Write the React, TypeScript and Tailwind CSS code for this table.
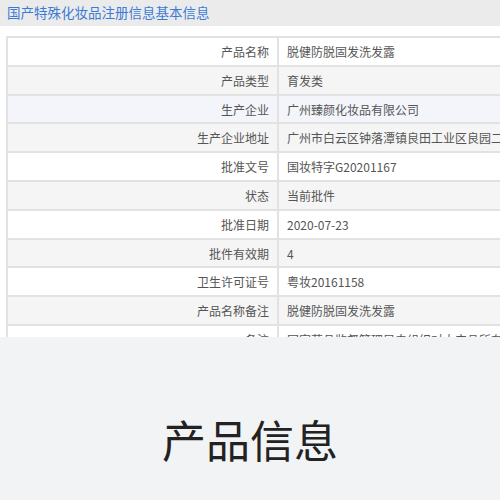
const rows: { label: string; value: string; bg: string }[] = [
  { label: "产品名称", value: "脱健防脱固发洗发露", bg: "bg-white" },
  { label: "产品类型", value: "育发类", bg: "bg-[#f5f5f5]" },
  { label: "生产企业", value: "广州臻颜化妆品有限公司", bg: "bg-[#f3f5fa]" },
  { label: "生产企业地址", value: "广州市白云区钟落潭镇良田工业区良园二路8号", bg: "bg-[#f5f5f5]" },
  { label: "批准文号", value: "国妆特字G20201167", bg: "bg-white" },
  { label: "状态", value: "当前批件", bg: "bg-[#f5f5f5]" },
  { label: "批准日期", value: "2020-07-23", bg: "bg-white" },
  { label: "批件有效期", value: "4", bg: "bg-[#f5f5f5]" },
  { label: "卫生许可证号", value: "粤妆20161158", bg: "bg-white" },
  { label: "产品名称备注", value: "脱健防脱固发洗发露", bg: "bg-[#f5f5f5]" },
  { label: "备注", value: "国家药品监督管理局未组织对本产品所有", bg: "bg-white" },
];

export default function App() {
  return (
    <div className="w-[500px] h-[500px] overflow-hidden flex flex-col bg-white font-['Noto_Sans_CJK_SC','Noto_Sans',sans-serif]">
      {/* screenshot of the registry page */}
      <div className="h-[337px] shrink-0 overflow-hidden">
        <div className="h-[26px] bg-[#ebebeb] px-[7px] text-[13.5px] leading-[25px] text-[#3b7bd6] whitespace-nowrap">
          国产特殊化妆品注册信息基本信息
        </div>
        <div className="pt-[10px] pl-[6px]">
          <div className="w-[640px] border-t-2 border-l-2 border-[#e2e2e2]">
            {rows.map((r) => (
              <div
                key={r.label}
                className={`flex h-[28.8px] border-b-2 border-[#e2e2e2] text-[12px] text-[#555] ${r.bg}`}
              >
                <div className="w-[271px] shrink-0 border-r-2 border-[#e2e2e2] pr-[8px] text-right leading-[27px] whitespace-nowrap">
                  {r.label}
                </div>
                <div className="pl-[8px] leading-[27px] whitespace-nowrap">{r.value}</div>
              </div>
            ))}
          </div>
        </div>
      </div>

      <div className="flex-1 bg-[#f2f3f5] flex justify-center pt-[80px]">
        <div className="text-[44px] leading-none text-[#222] tracking-[0px]">产品信息</div>
      </div>
    </div>
  );
}
